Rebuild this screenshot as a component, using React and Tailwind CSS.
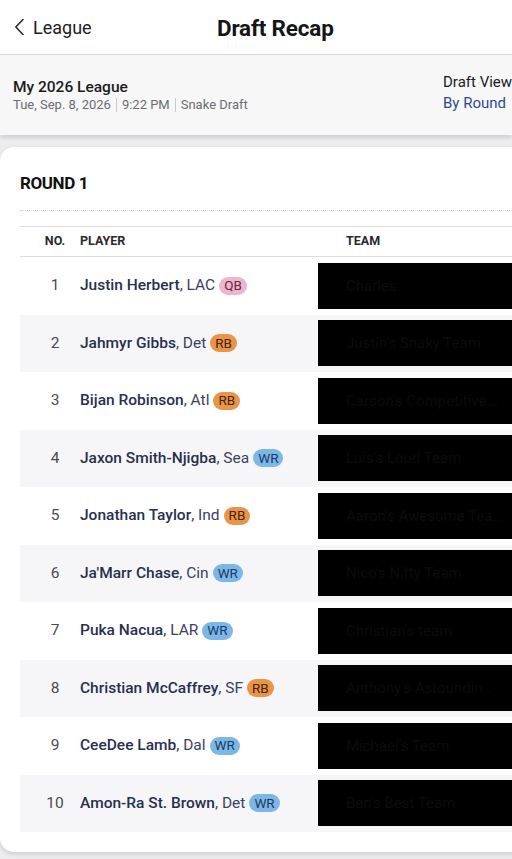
import React from "react";

const picks = [
  { no: 1, name: "Justin Herbert", team: "LAC", pos: "QB", owner: "Charles" },
  { no: 2, name: "Jahmyr Gibbs", team: "Det", pos: "RB", owner: "Justin's Snaky Team" },
  { no: 3, name: "Bijan Robinson", team: "Atl", pos: "RB", owner: "Carson's Competitive..." },
  { no: 4, name: "Jaxon Smith-Njigba", team: "Sea", pos: "WR", owner: "Luis's Loud Team" },
  { no: 5, name: "Jonathan Taylor", team: "Ind", pos: "RB", owner: "Aaron's Awesome Tea..." },
  { no: 6, name: "Ja'Marr Chase", team: "Cin", pos: "WR", owner: "Nico's Nifty Team" },
  { no: 7, name: "Puka Nacua", team: "LAR", pos: "WR", owner: "Christian's team" },
  { no: 8, name: "Christian McCaffrey", team: "SF", pos: "RB", owner: "Anthony's Astoundin..." },
  { no: 9, name: "CeeDee Lamb", team: "Dal", pos: "WR", owner: "Michael's Team" },
  { no: 10, name: "Amon-Ra St. Brown", team: "Det", pos: "WR", owner: "Ben's Best Team" },
];

function Badge({ pos }) {
  if (pos === "QB")
    return (
      <span className="ml-[4px] inline-flex h-[18px] items-center rounded-full bg-[#eeb5cc] px-[5px] text-[13.5px] leading-none text-[#6a2444]">
        QB
      </span>
    );
  if (pos === "RB")
    return (
      <span className="ml-[4px] inline-flex h-[18px] items-center rounded-full bg-[#e8954a] px-[5px] text-[13.5px] leading-none text-[#4a2206]">
        RB
      </span>
    );
  return (
    <span className="ml-[4px] inline-flex h-[18px] items-center rounded-full bg-[#7db7e6] px-[5px] text-[13.5px] leading-none text-[#1b3a68]">
      WR
    </span>
  );
}

export default function App() {
  return (
    <div
      className="min-h-[859px] w-[512px] overflow-hidden bg-[#ededf0]"
      style={{ fontFamily: "Roboto, 'Open Sans', sans-serif" }}
    >
      {/* Top nav */}
      <div className="relative flex h-[55px] items-center border-b border-[#d6d6d9] bg-white">
        <div className="flex items-center pl-[14px] text-[18px] text-[#1d1d1f]">
          <svg width="11" height="18" viewBox="0 0 11 18" fill="none" className="mr-[8px]">
            <path d="M9 1.5 L1.8 9 L9 16.5" stroke="#2a2a2a" strokeWidth="1.6" strokeLinecap="round" strokeLinejoin="round" />
          </svg>
          <span>League</span>
        </div>
        <div className="absolute left-[217px] top-[12px] text-[22.5px] font-bold tracking-[-0.2px] text-[#151517]">
          Draft Recap
        </div>
      </div>

      {/* Info band */}
      <div className="flex h-[80px] items-start justify-between bg-[#f7f7f8] shadow-[0_3px_4px_rgba(0,0,0,0.12)]">
        <div className="pl-[13px] pt-[22px]">
          <div className="text-[15.5px] font-medium leading-[20px] text-[#1b1b1d]">My 2026 League</div>
          <div className="flex items-center text-[13px] leading-[16px] text-[#6c6c72]">
            <span>Tue, Sep. 8, 2026</span>
            <span className="mx-[5px] h-[14px] w-px bg-[#c9c9cd]" />
            <span>9:22 PM</span>
            <span className="mx-[5px] h-[14px] w-px bg-[#c9c9cd]" />
            <span>Snake Draft</span>
          </div>
        </div>
        <div className="w-[69px] shrink-0 overflow-hidden whitespace-nowrap pt-[17px] text-[15px] leading-[21px]">
          <div className="text-[#1b1b1d]">Draft View</div>
          <div className="text-[#2d4b8c]">By Round</div>
        </div>
      </div>

      {/* Card */}
      <div className="mt-[12px] ml-0 mr-[-20px] rounded-l-[14px] bg-white pb-[20px] shadow-[0_2px_5px_rgba(0,0,0,0.15)]">
        <div className="pl-[20px] pt-[26px]">
          <div className="text-[17px] font-bold leading-[20px] tracking-[-0.4px] text-[#111]">ROUND 1</div>
          <div className="mt-[17px] border-t border-dotted border-[#cfcfd3]" />
          <div className="mt-[15px] flex h-[31px] items-center border-y border-[#dcdce0] text-[12.5px] font-bold text-[#2a2a2d]">
            <div className="w-[60px] shrink-0 pl-[10px] text-center">NO.</div>
            <div className="w-[238px] shrink-0">PLAYER</div>
            <div className="pl-[28px]">TEAM</div>
          </div>
          {picks.map((p, i) => (
            <div
              key={p.no}
              className={`flex h-[57.5px] items-center ${i % 2 === 1 ? "bg-[#f6f6f8]" : "bg-white"}`}
            >
              <div className="w-[60px] shrink-0 pl-[10px] text-center text-[15.5px] text-[#4a4a50]">{p.no}</div>
              <div className="flex w-[238px] shrink-0 items-center whitespace-nowrap text-[15.5px] text-[#2b3553]">
                <span className="font-medium text-[#27304f]">{p.name}</span>
                <span className="text-[#3a4260]">, {p.team}</span>
                <Badge pos={p.pos} />
              </div>
              <div className="flex h-[46px] flex-1 items-center bg-black pl-[28px] text-[15px] whitespace-nowrap text-[#0c0c0c]">
                {p.owner}
              </div>
            </div>
          ))}
        </div>
      </div>
    </div>
  );
}
